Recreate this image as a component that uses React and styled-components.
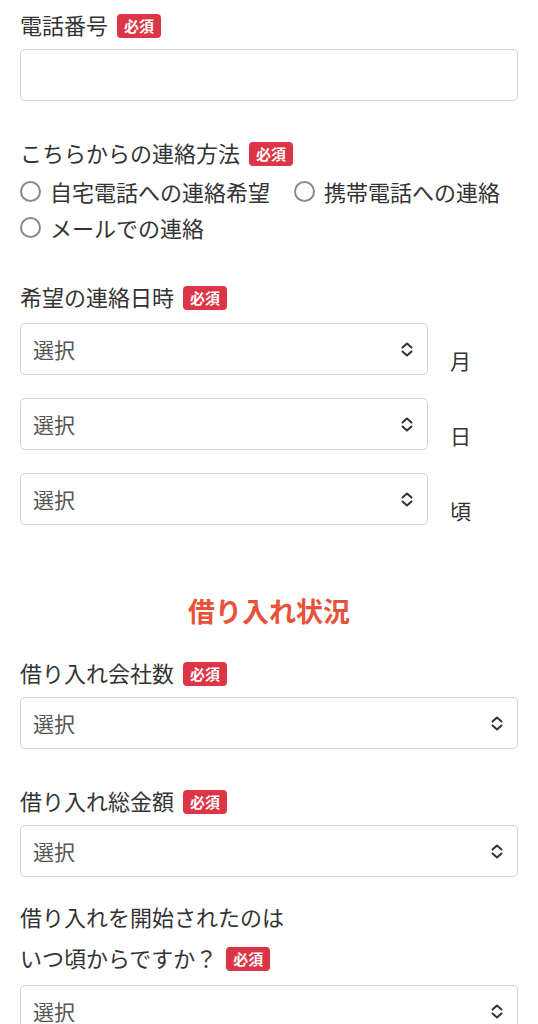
import React from 'react';
import styled, { createGlobalStyle } from 'styled-components';

const GlobalStyle = createGlobalStyle`
  * { box-sizing: border-box; }
  body {
    margin: 0;
    background: #fff;
    font-family: "Noto Sans CJK JP", "Noto Sans", sans-serif;
    color: #333;
  }
`;

const Page = styled.form`
  padding: 9px 20px 0;
`;

const FieldGroup = styled.div`
  margin-bottom: ${(p) => p.$gap ?? 36}px;
`;

const Label = styled.div`
  font-size: 22px;
  line-height: ${(p) => p.$lineHeight ?? 30}px;
  margin-bottom: ${(p) => p.$mb ?? 10}px;
  color: #333;
`;

const Badge = styled.span`
  display: inline-block;
  margin-left: 9px;
  padding: 0 7px;
  height: 24px;
  line-height: 24px;
  border-radius: 4px;
  background: #dc3545;
  color: #fff;
  font-size: 15px;
  font-weight: 700;
  vertical-align: 2px;
`;

const TextInput = styled.input`
  display: block;
  width: 100%;
  height: 52px;
  border: 1px solid #d0d5da;
  border-radius: 5px;
  padding: 0 12px;
  font-size: 21px;
  font-family: inherit;
  outline: none;
`;

const SelectWrap = styled.div`
  position: relative;
  height: 52px;
`;

const NativeSelect = styled.select`
  appearance: none;
  -webkit-appearance: none;
  width: 100%;
  height: 52px;
  border: 1px solid #d0d5da;
  border-radius: 5px;
  background: #fff;
  padding: 0 40px 0 12px;
  font-size: 21px;
  font-family: inherit;
  color: #555;
  outline: none;
`;

const Chevron = styled.svg`
  position: absolute;
  right: 13px;
  top: 18px;
  width: 16px;
  height: 17px;
  pointer-events: none;
`;

const RadioGroup = styled.div`
  display: flex;
  flex-wrap: wrap;
  column-gap: 24px;
  margin-top: -2px;
`;

const RadioItem = styled.label`
  display: flex;
  align-items: center;
  height: 36px;
  font-size: 22px;
  color: #333;
`;

const RadioCircle = styled.span`
  width: 21px;
  height: 21px;
  border: 2px solid #8a8a8a;
  border-radius: 50%;
  margin-right: 9px;
  flex-shrink: 0;
`;

const DateRows = styled.div`
  display: flex;
  flex-direction: column;
  gap: 23px;
`;

const DateRow = styled.div`
  display: grid;
  grid-template-columns: 1fr 68px;
  column-gap: 22px;
`;

const Unit = styled.span`
  align-self: end;
  font-size: 21px;
  line-height: 30px;
  color: #333;
`;

const SectionTitle = styled.h2`
  margin: 66px 0 26px;
  text-align: center;
  font-size: 27px;
  line-height: 40px;
  font-weight: 700;
  color: #e8513a;
`;

const Select = () => (
  <SelectWrap>
    <NativeSelect defaultValue="">
      <option value="">選択</option>
    </NativeSelect>
    <Chevron viewBox="0 0 16 17" fill="none" stroke="#333" strokeWidth="2" strokeLinecap="round" strokeLinejoin="round">
      <path d="M3.5 6.5 L8 2.5 L12.5 6.5" />
      <path d="M3.5 10.5 L8 14.5 L12.5 10.5" />
    </Chevron>
  </SelectWrap>
);

const Required = () => <Badge>必須</Badge>;

export default function App() {
  return (
    <>
      <GlobalStyle />
      <Page>
        <FieldGroup>
          <Label>
            電話番号<Required />
          </Label>
          <TextInput type="tel" />
        </FieldGroup>

        <FieldGroup>
          <Label $mb={8}>
            こちらからの連絡方法<Required />
          </Label>
          <RadioGroup>
            {['自宅電話への連絡希望', '携帯電話への連絡', 'メールでの連絡'].map((t) => (
              <RadioItem key={t}>
                <RadioCircle />
                {t}
              </RadioItem>
            ))}
          </RadioGroup>
        </FieldGroup>

        <FieldGroup $gap={0}>
          <Label $mb={12}>
            希望の連絡日時<Required />
          </Label>
          <DateRows>
            {['月', '日', '頃'].map((u) => (
              <DateRow key={u}>
                <Select />
                <Unit>{u}</Unit>
              </DateRow>
            ))}
          </DateRows>
        </FieldGroup>

        <SectionTitle>借り入れ状況</SectionTitle>

        <FieldGroup>
          <Label>
            借り入れ会社数<Required />
          </Label>
          <Select />
        </FieldGroup>

        <FieldGroup $gap={19}>
          <Label>
            借り入れ総金額<Required />
          </Label>
          <Select />
        </FieldGroup>

        <FieldGroup>
          <Label $lineHeight={41} $mb={7}>
            借り入れを開始されたのは
            <br />
            いつ頃からですか？<Required />
          </Label>
          <Select />
        </FieldGroup>
      </Page>
    </>
  );
}
